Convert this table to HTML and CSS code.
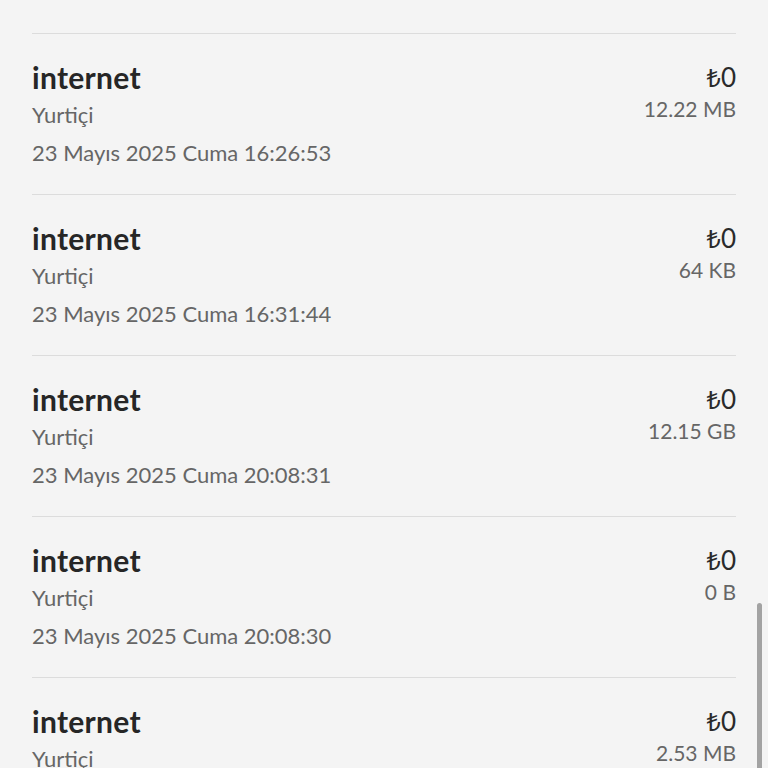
FILE: index.html
```html
<!DOCTYPE html>
<html lang="tr">
<head>
<meta charset="utf-8">
<link rel="stylesheet" href="styles.css">
</head>
<body>
<div class="page">
  <ul class="list">
    <li class="row">
      <div class="info">
        <div class="title">internet</div>
        <div class="sub">Yurtiçi</div>
        <div class="date">23 Mayıs 2025 Cuma 16:26:53</div>
      </div>
      <div class="amount">
        <div class="price"><span class="cur">₺</span>0</div>
        <div class="usage">12.22 MB</div>
      </div>
    </li>
    <li class="row">
      <div class="info">
        <div class="title">internet</div>
        <div class="sub">Yurtiçi</div>
        <div class="date">23 Mayıs 2025 Cuma 16:31:44</div>
      </div>
      <div class="amount">
        <div class="price"><span class="cur">₺</span>0</div>
        <div class="usage">64 KB</div>
      </div>
    </li>
    <li class="row">
      <div class="info">
        <div class="title">internet</div>
        <div class="sub">Yurtiçi</div>
        <div class="date">23 Mayıs 2025 Cuma 20:08:31</div>
      </div>
      <div class="amount">
        <div class="price"><span class="cur">₺</span>0</div>
        <div class="usage">12.15 GB</div>
      </div>
    </li>
    <li class="row">
      <div class="info">
        <div class="title">internet</div>
        <div class="sub">Yurtiçi</div>
        <div class="date">23 Mayıs 2025 Cuma 20:08:30</div>
      </div>
      <div class="amount">
        <div class="price"><span class="cur">₺</span>0</div>
        <div class="usage">0 B</div>
      </div>
    </li>
    <li class="row">
      <div class="info">
        <div class="title">internet</div>
        <div class="sub">Yurtiçi</div>
        <div class="date">23 Mayıs 2025 Cuma 20:08:29</div>
      </div>
      <div class="amount">
        <div class="price"><span class="cur">₺</span>0</div>
        <div class="usage">2.53 MB</div>
      </div>
    </li>
  </ul>
  <div class="scrollbar"></div>
</div>
</body>
</html>
```

FILE: styles.css
```css
html, body {
  margin: 0;
  padding: 0;
  background: #f4f4f4;
}
body {
  font-family: "Lato", "Noto Sans", sans-serif;
  color: #222;
  overflow: hidden;
  height: 768px;
}
.page {
  position: relative;
  height: 768px;
  overflow: hidden;
}
.list {
  list-style: none;
  margin: 0;
  padding: 33px 32px 0 32px;
}
.row {
  display: flex;
  justify-content: space-between;
  align-items: flex-start;
  border-top: 1px solid #dcdcdc;
  height: 161px;
  box-sizing: border-box;
  padding-top: 25px;
}
.title {
  font-size: 30px;
  font-weight: 700;
  line-height: 36px;
  letter-spacing: 0.3px;
  color: #262626;
}
.sub, .date {
  font-size: 22px;
  line-height: 38px;
  color: #666;
}
.sub {
  margin-top: 1px;
}
.amount {
  text-align: right;
  padding-top: 1px;
}
.price {
  font-size: 26px;
  line-height: 34px;
  color: #2a2a2a;
}
.cur {
  font-family: "Noto Sans", "DejaVu Sans", sans-serif;
  font-size: 25px;
}
.usage {
  font-size: 21px;
  line-height: 30px;
  color: #666;
}
.scrollbar {
  position: absolute;
  right: 6px;
  top: 603px;
  width: 5px;
  height: 180px;
  border-radius: 3px;
  background: #a3a3a3;
}
```
